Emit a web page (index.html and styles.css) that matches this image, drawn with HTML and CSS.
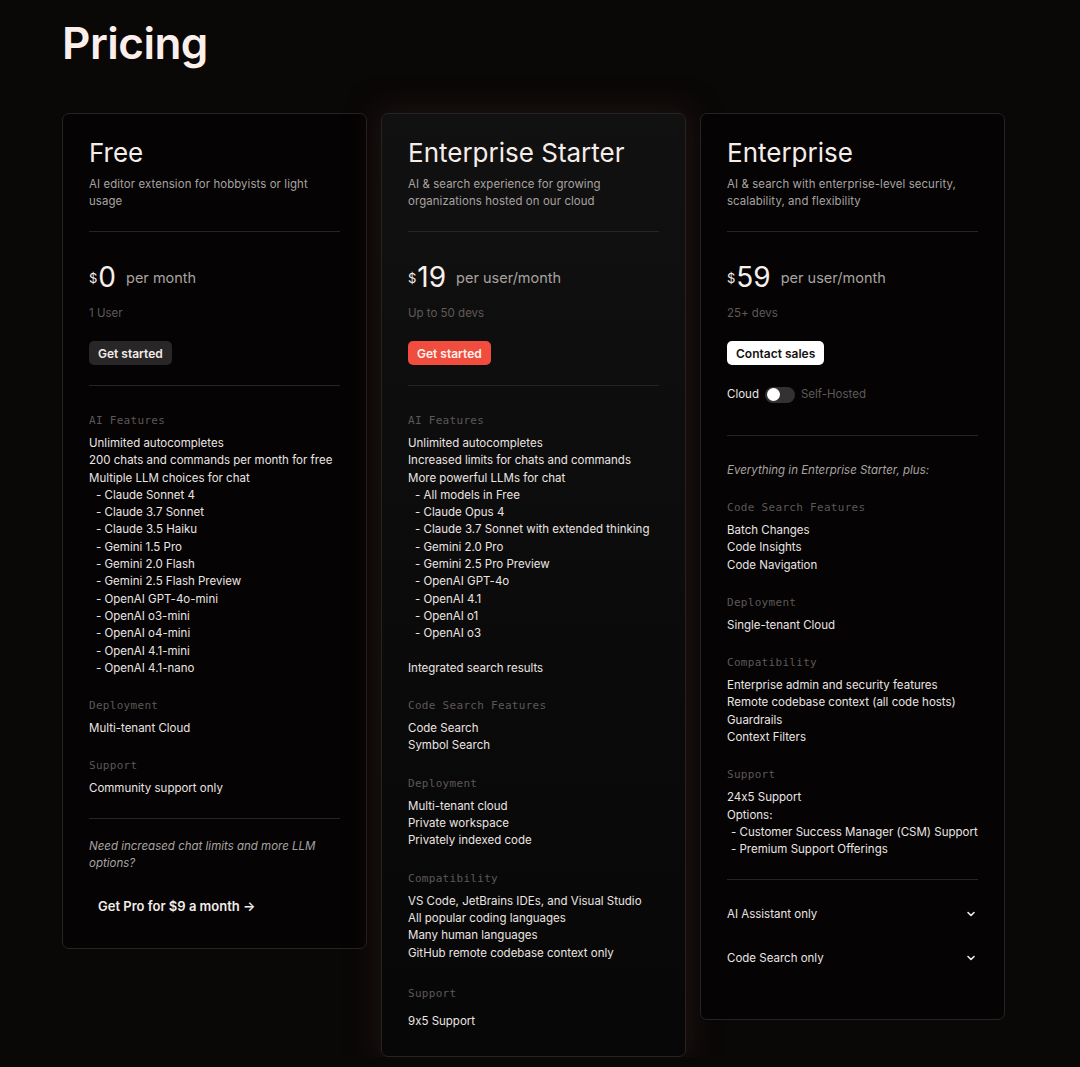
FILE: index.html
```html
<!DOCTYPE html>
<html lang="en">
<head>
<meta charset="utf-8">
<title>Pricing</title>
<link rel="stylesheet" href="styles.css">
</head>
<body>
<main class="page">
  <h1 class="page-title">Pricing</h1>
  <div class="plans">
    <!-- Free -->
    <section class="card">
      <header class="card-head">
        <h2 class="card-title">Free</h2>
        <p class="card-desc">AI editor extension for hobbyists or light usage</p>
      </header>
      <div class="price-block">
        <div class="price"><span class="cur">$</span><span class="amount">0</span><span class="per">per month</span></div>
        <p class="seats">1 User</p>
        <a class="btn btn-dark">Get started</a>
      </div>
      <div class="features">
        <div class="group">
          <h3 class="group-label">AI Features</h3>
          <ul class="items">
            <li>Unlimited autocompletes</li>
            <li>200 chats and commands per month for free</li>
            <li>Multiple LLM choices for chat</li>
            <li class="sub">- Claude Sonnet 4</li>
            <li class="sub">- Claude 3.7 Sonnet</li>
            <li class="sub">- Claude 3.5 Haiku</li>
            <li class="sub">- Gemini 1.5 Pro</li>
            <li class="sub">- Gemini 2.0 Flash</li>
            <li class="sub">- Gemini 2.5 Flash Preview</li>
            <li class="sub">- OpenAI GPT-4o-mini</li>
            <li class="sub">- OpenAI o3-mini</li>
            <li class="sub">- OpenAI o4-mini</li>
            <li class="sub">- OpenAI 4.1-mini</li>
            <li class="sub">- OpenAI 4.1-nano</li>
          </ul>
        </div>
        <div class="group">
          <h3 class="group-label">Deployment</h3>
          <ul class="items"><li>Multi-tenant Cloud</li></ul>
        </div>
        <div class="group">
          <h3 class="group-label">Support</h3>
          <ul class="items"><li>Community support only</li></ul>
        </div>
      </div>
      <div class="upsell">
        <p class="note">Need increased chat limits and more LLM options?</p>
        <a class="pro-link">Get Pro for $9 a month →</a>
      </div>
    </section>

    <!-- Enterprise Starter -->
    <section class="card card-featured">
      <header class="card-head">
        <h2 class="card-title">Enterprise Starter</h2>
        <p class="card-desc">AI &amp; search experience for growing organizations hosted on our cloud</p>
      </header>
      <div class="price-block">
        <div class="price"><span class="cur">$</span><span class="amount">19</span><span class="per">per user/month</span></div>
        <p class="seats">Up to 50 devs</p>
        <a class="btn btn-red">Get started</a>
      </div>
      <div class="features">
        <div class="group">
          <h3 class="group-label">AI Features</h3>
          <ul class="items">
            <li>Unlimited autocompletes</li>
            <li>Increased limits for chats and commands</li>
            <li>More powerful LLMs for chat</li>
            <li class="sub">- All models in Free</li>
            <li class="sub">- Claude Opus 4</li>
            <li class="sub">- Claude 3.7 Sonnet with extended thinking</li>
            <li class="sub">- Gemini 2.0 Pro</li>
            <li class="sub">- Gemini 2.5 Pro Preview</li>
            <li class="sub">- OpenAI GPT-4o</li>
            <li class="sub">- OpenAI 4.1</li>
            <li class="sub">- OpenAI o1</li>
            <li class="sub">- OpenAI o3</li>
            <li class="blank"></li>
            <li>Integrated search results</li>
          </ul>
        </div>
        <div class="group">
          <h3 class="group-label">Code Search Features</h3>
          <ul class="items">
            <li>Code Search</li>
            <li>Symbol Search</li>
          </ul>
        </div>
        <div class="group">
          <h3 class="group-label">Deployment</h3>
          <ul class="items">
            <li>Multi-tenant cloud</li>
            <li>Private workspace</li>
            <li>Privately indexed code</li>
          </ul>
        </div>
        <div class="group">
          <h3 class="group-label">Compatibility</h3>
          <ul class="items">
            <li>VS Code, JetBrains IDEs, and Visual Studio</li>
            <li>All popular coding languages</li>
            <li>Many human languages</li>
            <li>GitHub remote codebase context only</li>
          </ul>
        </div>
        <div class="group group-last">
          <h3 class="group-label">Support</h3>
          <ul class="items"><li>9x5 Support</li></ul>
        </div>
      </div>
    </section>

    <!-- Enterprise -->
    <section class="card">
      <header class="card-head">
        <h2 class="card-title">Enterprise</h2>
        <p class="card-desc">AI &amp; search with enterprise-level security, scalability, and flexibility</p>
      </header>
      <div class="price-block price-block-tall">
        <div class="price"><span class="cur">$</span><span class="amount">59</span><span class="per">per user/month</span></div>
        <p class="seats">25+ devs</p>
        <a class="btn btn-light">Contact sales</a>
        <div class="hosting">
          <span class="opt opt-on">Cloud</span>
          <span class="switch"><span class="knob"></span></span>
          <span class="opt">Self-Hosted</span>
        </div>
      </div>
      <div class="features">
        <p class="note intro">Everything in Enterprise Starter, plus:</p>
        <div class="group">
          <h3 class="group-label">Code Search Features</h3>
          <ul class="items">
            <li>Batch Changes</li>
            <li>Code Insights</li>
            <li>Code Navigation</li>
          </ul>
        </div>
        <div class="group">
          <h3 class="group-label">Deployment</h3>
          <ul class="items"><li>Single-tenant Cloud</li></ul>
        </div>
        <div class="group">
          <h3 class="group-label">Compatibility</h3>
          <ul class="items">
            <li>Enterprise admin and security features</li>
            <li>Remote codebase context (all code hosts)</li>
            <li>Guardrails</li>
            <li>Context Filters</li>
          </ul>
        </div>
        <div class="group">
          <h3 class="group-label">Support</h3>
          <ul class="items">
            <li>24x5 Support</li>
            <li>Options:</li>
            <li class="sub sub-tight">- Customer Success Manager (CSM) Support</li>
            <li class="sub sub-tight">- Premium Support Offerings</li>
          </ul>
        </div>
      </div>
      <div class="accordion">
        <div class="acc-row"><span>AI Assistant only</span>
          <svg class="chev" width="10" height="10" viewBox="0 0 10 10"><path d="M2 3.5 L5 6.5 L8 3.5" fill="none" stroke="currentColor" stroke-width="1.6" stroke-linecap="round" stroke-linejoin="round"/></svg>
        </div>
        <div class="acc-row"><span>Code Search only</span>
          <svg class="chev" width="10" height="10" viewBox="0 0 10 10"><path d="M2 3.5 L5 6.5 L8 3.5" fill="none" stroke="currentColor" stroke-width="1.6" stroke-linecap="round" stroke-linejoin="round"/></svg>
        </div>
      </div>
    </section>
  </div>
</main>
</body>
</html>
```

FILE: styles.css
```css
* { box-sizing: border-box; }

html, body {
  margin: 0;
  padding: 0;
  background: #0a0707;
}

body {
  font-family: Inter, "Noto Sans", "Liberation Sans", sans-serif;
  font-feature-settings: "calt" 0;
  color: #ebe5e3;
  -webkit-font-smoothing: antialiased;
}

.page {
  padding: 21px 62px 0;
}

.page-title {
  margin: 0;
  font-size: 44px;
  line-height: 44px;
  font-weight: 600;
  letter-spacing: -0.5px;
  color: #fcefeb;
}

.plans {
  margin-top: 48px;
  display: flex;
  align-items: flex-start;
  gap: 14px;
}

.card {
  width: 305px;
  flex: none;
  background: #050303;
  border: 1px solid #262323;
  border-radius: 7px;
  padding: 23px 26px 26px;
}

.card-featured {
  background: linear-gradient(180deg, #121111 0%, #0b0a0a 60%, #080707 100%);
  box-shadow: 0 0 28px 6px rgba(40, 28, 24, 0.55);
}

.card-head {
  padding-bottom: 21px;
  border-bottom: 1px solid #262424;
}

.card-title {
  margin: 0;
  font-size: 26px;
  line-height: 32px;
  font-weight: 400;
  color: #f5ede9;
}

.card-desc {
  margin: 7px 0 0;
  font-size: 11.4px;
  line-height: 17px;
  color: #a8a3a1;
  letter-spacing: 0.1px;
}

.price-block {
  padding: 27px 0 20px;
  border-bottom: 1px solid #262424;
}

.price-block-tall {
  padding-bottom: 32px;
}

.price {
  display: flex;
  align-items: center;
  height: 36px;
}

.cur {
  font-size: 13px;
  color: #f3ebe8;
  margin-right: 1px;
  position: relative;
  top: 1px;
}

.amount {
  font-size: 28px;
  line-height: 36px;
  color: #f7efec;
  margin-right: 10px;
}

.per {
  font-size: 14.5px;
  color: #a8a3a1;
}

.seats {
  margin: 10px 0 0;
  font-size: 11.5px;
  line-height: 17px;
  color: #5f5a59;
}

.btn {
  display: inline-flex;
  align-items: center;
  height: 24px;
  margin-top: 19px;
  padding: 0 9px;
  border-radius: 5px;
  font-size: 12px;
  font-weight: 600;
  cursor: pointer;
}

.btn-dark { background: #282626; color: #f3ece9; }
.btn-red { background: #f04d3f; color: #fff4f0; }
.btn-light { background: #ffffff; color: #141111; }

.hosting {
  display: flex;
  align-items: center;
  gap: 6px;
  margin-top: 21px;
  font-size: 11.5px;
  line-height: 17px;
}

.opt { color: #5f5a59; }
.opt-on { color: #ebe5e3; }

.switch {
  width: 30px;
  height: 16px;
  border-radius: 8px;
  background: #333131;
  display: inline-flex;
  align-items: center;
  padding: 2px;
}

.knob {
  width: 13px;
  height: 13px;
  border-radius: 50%;
  background: #fff;
}

.features {
  padding-top: 26px;
}

.group + .group { margin-top: 20px; }
.intro + .group { margin-top: 20px; }

.group-label {
  margin: 0 0 6px;
  font-family: "DejaVu Sans Mono", "Liberation Mono", monospace;
  font-size: 11px;
  line-height: 17px;
  font-weight: 400;
  letter-spacing: 0.3px;
  color: #5c5857;
}

.group.group-last { margin-top: 23px; }
.group-last .group-label { margin-bottom: 11px; }

.items {
  list-style: none;
  margin: 0;
  padding: 0;
  font-size: 11.5px;
  line-height: 17.3px;
  color: #ebe5e3;
}

.items .sub { padding-left: 7px; }
.items .sub-tight { padding-left: 4px; }
.items .blank { height: 17.3px; }

.note {
  margin: 0;
  font-size: 11.5px;
  line-height: 17px;
  font-style: italic;
  color: #a8a3a1;
}

.upsell {
  margin-top: 20px;
  padding-top: 19px;
  border-top: 1px solid #262424;
}

.pro-link {
  display: block;
  width: fit-content;
  margin-top: 18px;
  padding: 8px 9px 7px;
  font-size: 13px;
  line-height: 17px;
  font-weight: 600;
  color: #f3ece9;
  cursor: pointer;
}

.accordion {
  margin-top: 20px;
  border-top: 1px solid #262424;
  padding: 12px 0 13px;
}

.acc-row {
  height: 44px;
  display: flex;
  align-items: center;
  justify-content: space-between;
  font-size: 11.5px;
  color: #ebe5e3;
  padding-right: 2px;
}

.chev { color: #f1ebe8; }
```
